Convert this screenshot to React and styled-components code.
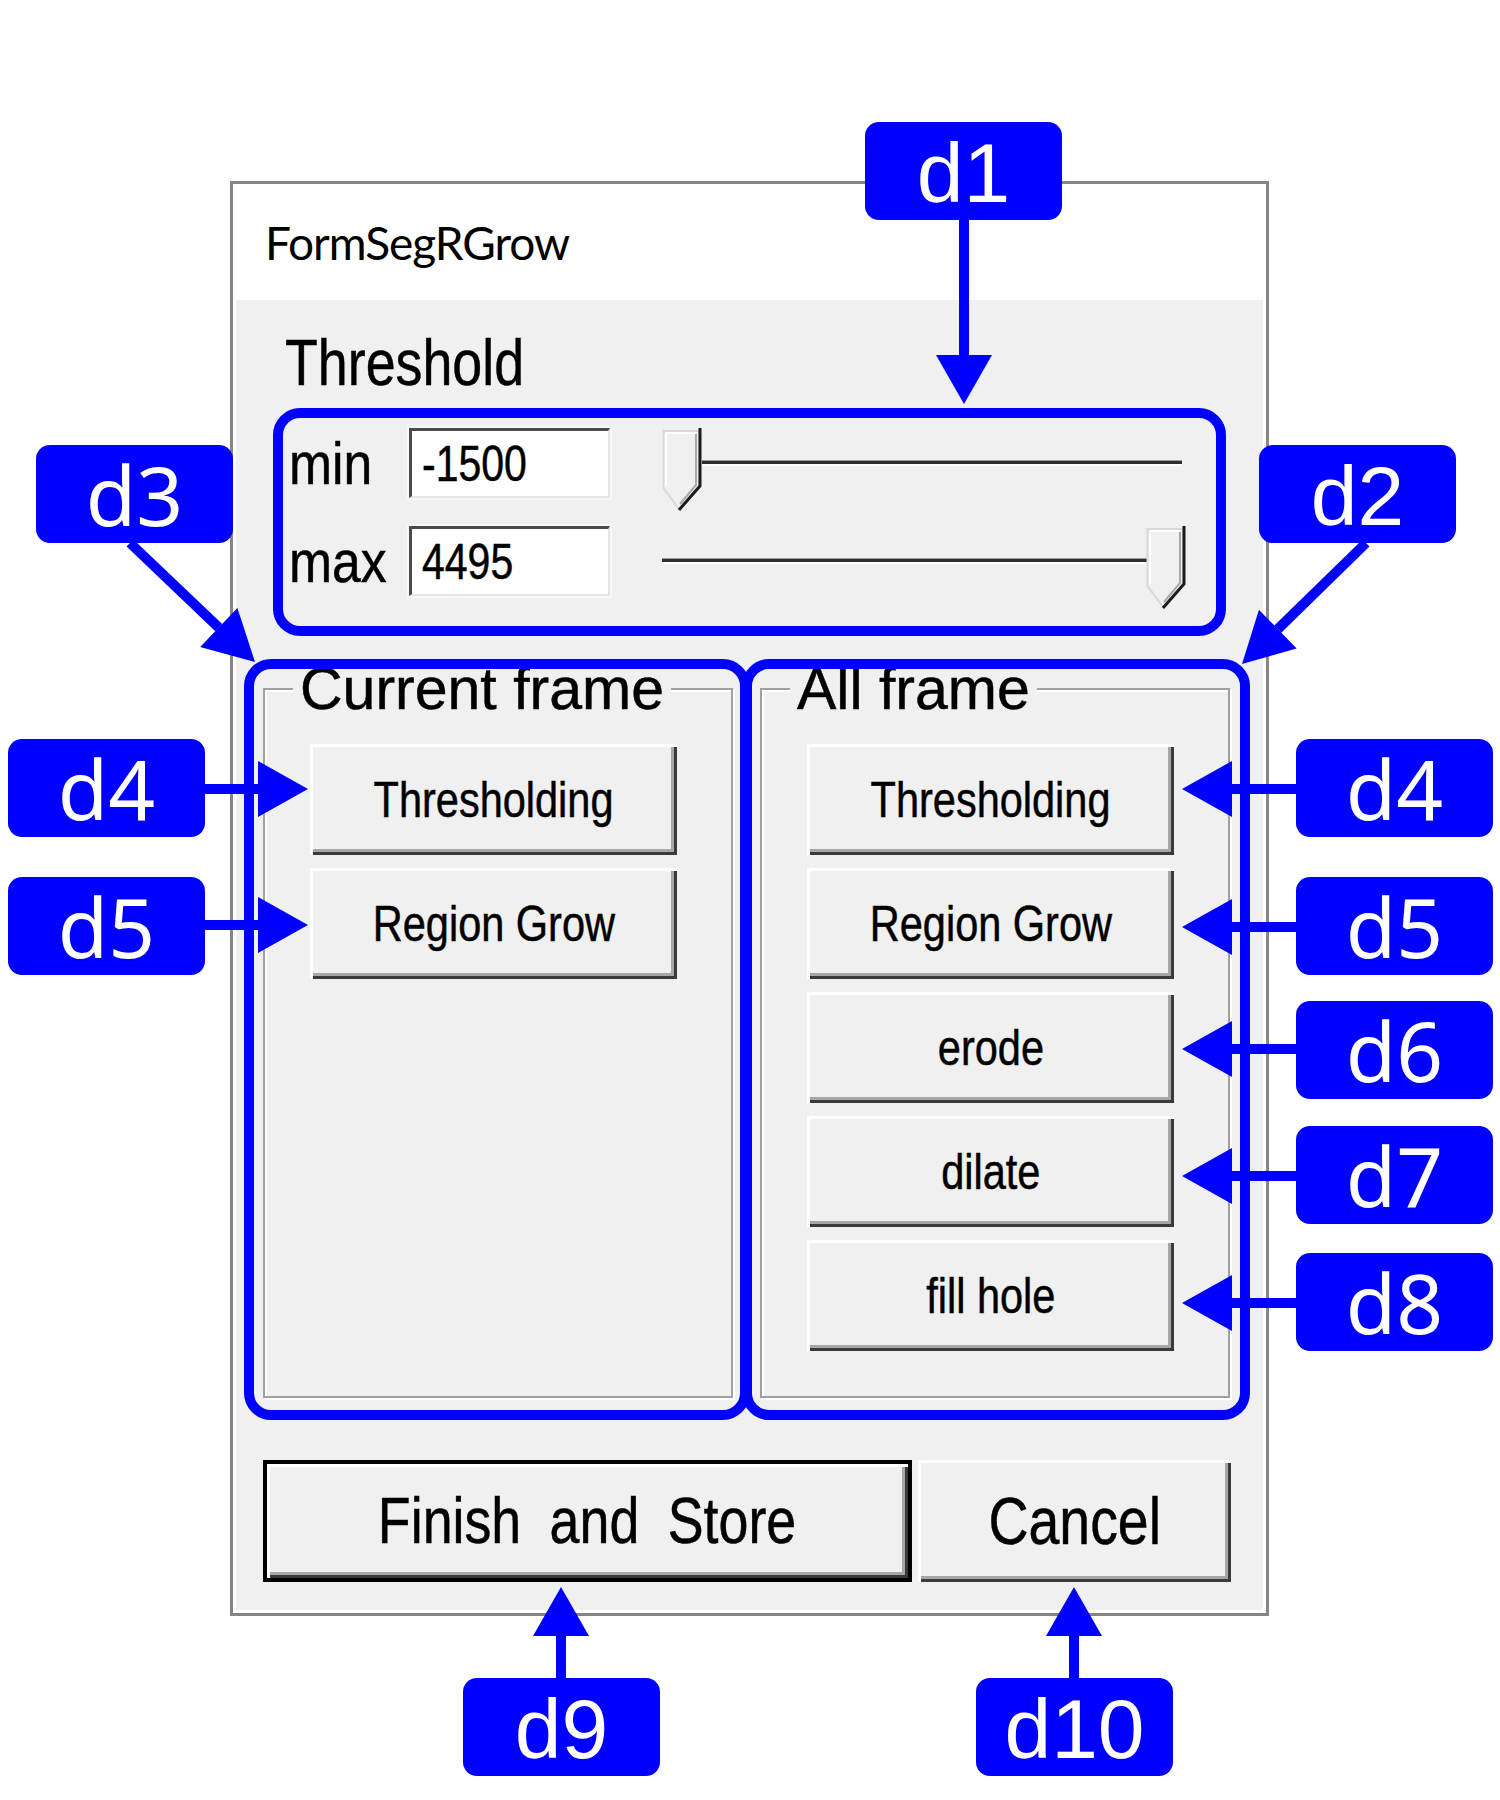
import React from "react";
import styled, { createGlobalStyle } from "styled-components";

const UI_FONT = `"Liberation Sans", Arial, sans-serif`;
const BLUE = "#0000ff";

const GlobalStyle = createGlobalStyle`
  html, body { margin: 0; padding: 0; background: #ffffff; }
  body { font-family: "Liberation Sans", Arial, sans-serif; }
  * { box-sizing: border-box; }
`;

const Page = styled.div`
  position: relative;
  width: 1500px;
  height: 1800px;
  padding: 181px 0 0 230px;
  overflow: hidden;
`;

const Window = styled.div`
  width: 1039px;
  height: 1435px;
  border: 3px solid #858585;
  background: #ffffff;
  padding: 0 3px 3px 3px;
  display: flex;
  flex-direction: column;
`;

const TitleBar = styled.div`
  flex: none;
  height: 116px;
  display: flex;
  align-items: center;
  padding-left: 29px;
  font-family: Lato, "Noto Sans", sans-serif;
  font-size: 46px;
  letter-spacing: -1px;
  color: #000;
`;

const Body = styled.div`
  flex: 1;
  background: #f0f0f0;
  display: flex;
  flex-direction: column;
  align-items: flex-start;
  padding-left: 27px;
  font-family: ${UI_FONT};
  color: #000;
  -webkit-text-stroke: 0.5px #000;
`;

/* condensed bitmap-like dialog text */
const Squeeze = styled.span`
  display: inline-block;
  white-space: nowrap;
  transform: scaleX(${(p) => p.$k || 0.84});
  transform-origin: ${(p) => (p.$center ? "center" : "left")} center;
  word-spacing: ${(p) => p.$ws || 0}px;
`;

const SectionLabel = styled.div`
  margin: 31px 0 0 22px;
  font-size: 64px;
  line-height: 64px;
`;

const Rows = styled.div`
  display: flex;
  flex-direction: column;
  gap: 14px;
  margin: 33px 0 0 26px;
`;

const Row = styled.div`
  display: flex;
  align-items: flex-start;
  height: 84px;
`;

const RowLabel = styled.div`
  width: 120px;
  margin-top: 6px;
  font-size: 60px;
  line-height: 60px;
`;

const NumberBox = styled.div`
  width: 201px;
  height: 70px;
  display: flex;
  align-items: center;
  padding-left: 10px;
  background: #ffffff;
  border-top: 3px solid #4a4a4a;
  border-left: 3px solid #4a4a4a;
  border-right: 2px solid #e4e4e4;
  border-bottom: 2px solid #e4e4e4;
  box-shadow: 0 0 0 2px #f8f8f8;
  font-size: 50px;
  line-height: 50px;
`;

const Slider = styled.div`
  width: 524px;
  height: 84px;
  margin-left: 52px;
  display: flex;
  align-items: flex-start;
`;

const Track = styled.div`
  flex: 1;
  margin-top: 32px;
  margin-right: ${(p) => p.$right || 0}px;
  height: 6px;
  background: #2e2e2e;
  border-top: 1px solid #9a9a9a;
  border-bottom: 2px solid #ffffff;
`;

const ThumbSvg = styled.svg`
  flex: none;
  display: block;
  margin-left: ${(p) => p.$left || 0}px;
`;

const Thumb = ({ left }) => (
  <ThumbSvg $left={left} width="40" height="84" viewBox="0 0 40 84">
    <path d="M1.5 3 H37 V58 L17 81 L1.5 60 Z" fill="#f0f0f0" stroke="#d8d8d8" strokeWidth="2" />
    <path d="M4 5 H34 M4 5 V58" fill="none" stroke="#ffffff" strokeWidth="2" />
    <path d="M34 6 V57 L18 76" fill="none" stroke="#a8a8a8" strokeWidth="2" />
    <path d="M38 0 V58 L17 82" fill="none" stroke="#1c1c1c" strokeWidth="3" />
  </ThumbSvg>
);

const Groups = styled.div`
  display: grid;
  grid-template-columns: 470px 470px;
  column-gap: 27px;
  margin-top: 48px;
`;

const GroupBox = styled.fieldset`
  margin: 0;
  min-width: 0;
  height: 740px;
  padding: 24px 0 0 28px;
  border: 2px solid #a0a0a0;
  box-shadow: inset 2px 2px 0 #ffffff, 2px 2px 0 #ffffff;
`;

const GroupLegend = styled.legend`
  padding: 0 7px;
  background: #f0f0f0;
  white-space: nowrap;
  font-size: 59px;
  line-height: 62px;
`;

const ButtonColumn = styled.div`
  display: flex;
  flex-direction: column;
  gap: 13px;
  margin-left: 17px;
`;

const WinButton = styled.button`
  width: ${(p) => p.$w || 367}px;
  height: ${(p) => p.$h || 111}px;
  padding: 0;
  display: flex;
  align-items: center;
  justify-content: center;
  border: ${(p) => (p.$default ? "4px solid #000" : "none")};
  border-radius: 0;
  background: #f0f0f0;
  color: #000;
  font-family: ${UI_FONT};
  font-size: ${(p) => p.$size || 50}px;
  -webkit-text-stroke: 0.5px #000;
  box-shadow: inset 3px 3px 0 #ffffff, inset -3px -3px 0 #3a3a3a,
    inset -6px -6px 0 #a6a6a6;
`;

const BottomRow = styled.div`
  display: flex;
  gap: 6px;
  margin-top: 62px;
`;

/* ---------- annotation layer ---------- */

const Overlay = styled.svg`
  position: absolute;
  left: 0;
  top: 0;
  pointer-events: none;
`;

const Callout = styled.div`
  position: absolute;
  left: ${(p) => p.$x}px;
  top: ${(p) => p.$y}px;
  width: 197px;
  height: 98px;
  border-radius: 14px;
  background: ${BLUE};
  color: #ffffff;
  display: flex;
  align-items: center;
  justify-content: center;
  padding-top: ${(p) => (p.$arial ? 4 : 0)}px;
  font-family: ${(p) =>
    p.$arial ? `"Liberation Sans", Arial, sans-serif` : `"Noto Sans", "Open Sans", sans-serif`};
  font-size: ${(p) => (p.$arial ? 84 : 82)}px;
  line-height: 1;
`;

const HArrow = ({ y, from, tip }) => {
  const dir = Math.sign(tip - from);
  const base = tip - dir * 50;
  return (
    <g>
      <line x1={from} y1={y} x2={base} y2={y} stroke={BLUE} strokeWidth="10" />
      <polygon points={`${base},${y - 28} ${base},${y + 28} ${tip},${y}`} fill={BLUE} />
    </g>
  );
};

const VArrow = ({ x, from, tip }) => {
  const dir = Math.sign(tip - from);
  const base = tip - dir * 49;
  return (
    <g>
      <line x1={x} y1={from} x2={x} y2={base} stroke={BLUE} strokeWidth="10" />
      <polygon points={`${x - 28},${base} ${x + 28},${base} ${x},${tip}`} fill={BLUE} />
    </g>
  );
};

const DiagArrow = ({ x1, y1, x2, y2 }) => {
  const dx = x2 - x1;
  const dy = y2 - y1;
  const len = Math.hypot(dx, dy);
  const ux = dx / len;
  const uy = dy / len;
  const bx = x2 - ux * 50;
  const by = y2 - uy * 50;
  const nx = -uy * 27;
  const ny = ux * 27;
  return (
    <g>
      <line x1={x1} y1={y1} x2={bx} y2={by} stroke={BLUE} strokeWidth="10" />
      <polygon
        points={`${bx + nx},${by + ny} ${bx - nx},${by - ny} ${x2},${y2}`}
        fill={BLUE}
      />
    </g>
  );
};

const Annotations = () => (
  <>
    <Overlay width="1500" height="1800" viewBox="0 0 1500 1800">
      <g fill="none" stroke={BLUE} strokeWidth="10">
        <rect x="278" y="413" width="943" height="218" rx="22" />
        <rect x="249" y="664" width="496" height="751" rx="22" />
        <rect x="747" y="664" width="498" height="751" rx="22" />
      </g>
      <VArrow x={964} from={220} tip={404} />
      <DiagArrow x1={1366} y1={543} x2={1242} y2={664} />
      <DiagArrow x1={130} y1={543} x2={255} y2={662} />
      <HArrow y={789} from={205} tip={308} />
      <HArrow y={925} from={205} tip={308} />
      <HArrow y={789} from={1300} tip={1182} />
      <HArrow y={927} from={1300} tip={1182} />
      <HArrow y={1049} from={1300} tip={1182} />
      <HArrow y={1176} from={1300} tip={1182} />
      <HArrow y={1303} from={1300} tip={1182} />
      <VArrow x={561} from={1680} tip={1587} />
      <VArrow x={1074} from={1680} tip={1587} />
    </Overlay>
    <Callout $x={865} $y={122} $arial>d1</Callout>
    <Callout $x={1259} $y={445} $arial>d2</Callout>
    <Callout $x={36} $y={445}>d3</Callout>
    <Callout $x={8} $y={739}>d4</Callout>
    <Callout $x={8} $y={877}>d5</Callout>
    <Callout $x={1296} $y={739}>d4</Callout>
    <Callout $x={1296} $y={877}>d5</Callout>
    <Callout $x={1296} $y={1001}>d6</Callout>
    <Callout $x={1296} $y={1126}>d7</Callout>
    <Callout $x={1296} $y={1253}>d8</Callout>
    <Callout $x={463} $y={1678} $arial>d9</Callout>
    <Callout $x={976} $y={1678} $arial>d10</Callout>
  </>
);

const Label = ({ children, k }) => <Squeeze $k={k}>{children}</Squeeze>;
const Caption = ({ children, ws, k }) => (
  <Squeeze $center $k={k || 0.83} $ws={ws}>
    {children}
  </Squeeze>
);

export default function App() {
  return (
    <>
      <GlobalStyle />
      <Page>
        <Window>
          <TitleBar>FormSegRGrow</TitleBar>
          <Body>
            <SectionLabel>
              <Label k={0.84}>Threshold</Label>
            </SectionLabel>
            <Rows>
              <Row>
                <RowLabel>
                  <Label k={0.86}>min</Label>
                </RowLabel>
                <NumberBox>
                  <Label k={0.82}>-1500</Label>
                </NumberBox>
                <Slider>
                  <Thumb />
                  <Track $right={4} />
                </Slider>
              </Row>
              <Row>
                <RowLabel>
                  <Label k={0.86}>max</Label>
                </RowLabel>
                <NumberBox>
                  <Label k={0.82}>4495</Label>
                </NumberBox>
                <Slider>
                  <Track />
                  <Thumb left={-3} />
                </Slider>
              </Row>
            </Rows>
            <Groups>
              <GroupBox>
                <GroupLegend>Current frame</GroupLegend>
                <ButtonColumn>
                  <WinButton>
                    <Caption>Thresholding</Caption>
                  </WinButton>
                  <WinButton>
                    <Caption>Region Grow</Caption>
                  </WinButton>
                </ButtonColumn>
              </GroupBox>
              <GroupBox>
                <GroupLegend>All frame</GroupLegend>
                <ButtonColumn>
                  <WinButton>
                    <Caption>Thresholding</Caption>
                  </WinButton>
                  <WinButton>
                    <Caption>Region Grow</Caption>
                  </WinButton>
                  <WinButton>
                    <Caption>erode</Caption>
                  </WinButton>
                  <WinButton>
                    <Caption>dilate</Caption>
                  </WinButton>
                  <WinButton>
                    <Caption>fill hole</Caption>
                  </WinButton>
                </ButtonColumn>
              </GroupBox>
            </Groups>
            <BottomRow>
              <WinButton $default $w={649} $h={122} $size={64}>
                <Caption ws={16} k={0.84}>Finish and Store</Caption>
              </WinButton>
              <WinButton $w={313} $h={122} $size={66}>
                <Caption k={0.84}>Cancel</Caption>
              </WinButton>
            </BottomRow>
          </Body>
        </Window>
        <Annotations />
      </Page>
    </>
  );
}
